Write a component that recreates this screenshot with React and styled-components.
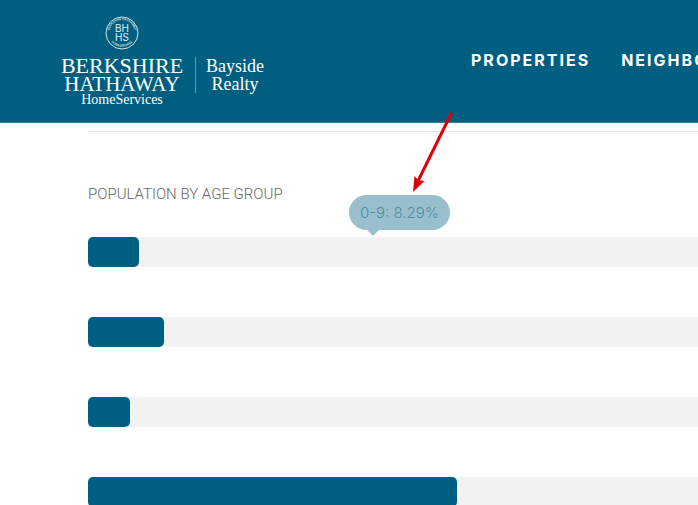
import React from "react";
import styled, { createGlobalStyle } from "styled-components";

const GlobalStyle = createGlobalStyle`
  *, *::before, *::after { box-sizing: border-box; }
  body {
    margin: 0;
    background: #fff;
    font-family: Inter, "Open Sans", sans-serif;
    overflow-x: hidden;
  }
`;

const Page = styled.div`
  position: relative;
`;

const Header = styled.header`
  display: flex;
  align-items: flex-start;
  gap: 207px;
  padding: 15px 0 16px 60px;
  background: #005e80;
  border-bottom: 1px solid #33809a;
  overflow: hidden;
`;

const Brand = styled.a`
  display: flex;
  align-items: flex-end;
  flex: none;
  color: #fff;
  text-decoration: none;
  font-family: "Liberation Serif", serif;
`;

const BrandMain = styled.span`
  display: flex;
  flex-direction: column;
  align-items: center;
  width: 124px;
  white-space: nowrap;
`;

const Seal = styled.svg`
  display: block;
  width: 36px;
  height: 36px;
  margin-bottom: 5px;
`;

const BrandName = styled.span`
  font-size: ${(p) => p.$size}px;
  line-height: ${(p) => p.$line}px;
`;

const Office = styled.span`
  display: flex;
  flex-direction: column;
  align-items: center;
  margin: 0 0 13px 11px;
  padding-left: 10px;
  border-left: 1px solid #5f9cb2;
  font-size: 18px;
  line-height: 18px;
  white-space: nowrap;
`;

const Nav = styled.nav`
  display: flex;
  gap: 31px;
  padding-top: 35px;
`;

const NavLink = styled.a`
  color: #fff;
  font-size: 16px;
  font-weight: 700;
  line-height: 20px;
  letter-spacing: 2px;
  text-decoration: none;
  white-space: nowrap;
`;

const Content = styled.main`
  padding: 8px 0 0 88px;
`;

const Divider = styled.hr`
  margin: 0;
  border: 0;
  border-top: 1px solid #e3e3e3;
`;

const Title = styled.h2`
  margin: 52px 0 33px;
  color: #666;
  font-family: Roboto, sans-serif;
  font-size: 15px;
  font-weight: 300;
  line-height: 20px;
  white-space: nowrap;
`;

const Chart = styled.div`
  display: grid;
  gap: 50px;
`;

const Track = styled.div`
  position: relative;
  height: 30px;
  background: #f2f2f2;
`;

const Fill = styled.div`
  height: 100%;
  border-radius: 5px;
  background: #005e80;
`;

const Tooltip = styled.div`
  position: absolute;
  left: 261px;
  bottom: 37px;
  height: 35px;
  padding: 0 11px;
  border-radius: 18px;
  background: #99bfcc;
  color: #4d8ea6;
  font-size: 15px;
  font-weight: 300;
  line-height: 35px;
  white-space: nowrap;

  &::after {
    content: "";
    position: absolute;
    left: 18px;
    top: 100%;
    border: 6px solid transparent;
    border-top-color: #99bfcc;
    border-bottom: 0;
  }
`;

const Arrow = styled.svg`
  position: absolute;
  left: 410px;
  top: 110px;
  width: 46px;
  height: 84px;
  pointer-events: none;
`;

const groups = [
  { share: 8.29, label: "0-9: 8.29%" },
  { share: 12.4 },
  { share: 6.85 },
  { share: 60.5 },
];

function BrandSeal() {
  return (
    <Seal viewBox="0 0 36 36" fill="none" stroke="#d5e4ea" aria-hidden="true">
      <defs>
        <path id="seal-top" d="M5.5 20 A12.7 12.7 0 1 1 30.5 20" />
        <path id="seal-bottom" d="M4.5 22 A14.2 14.2 0 0 0 31.5 22" />
      </defs>
      <circle cx="18" cy="18" r="16" strokeWidth="1" />
      <g fill="#d5e4ea" stroke="none" fontFamily="Inter, sans-serif">
        <text fontSize="3" fontWeight="600">
          <textPath href="#seal-top" startOffset="50%" textAnchor="middle">
            BERKSHIRE HATHAWAY
          </textPath>
        </text>
        <text fontSize="3" fontWeight="600">
          <textPath href="#seal-bottom" startOffset="50%" textAnchor="middle">
            HOMESERVICES
          </textPath>
        </text>
        <g fontSize="10" fill="#e6eff2" textAnchor="middle">
          <text x="18" y="17">BH</text>
          <text x="18" y="26">HS</text>
        </g>
      </g>
    </Seal>
  );
}

export default function App() {
  return (
    <Page>
      <GlobalStyle />
      <Header>
        <Brand href="#">
          <BrandMain>
            <BrandSeal />
            <BrandName $size={22} $line={19}>BERKSHIRE</BrandName>
            <BrandName $size={21} $line={18}>HATHAWAY</BrandName>
            <BrandName $size={14} $line={13}>HomeServices</BrandName>
          </BrandMain>
          <Office>
            <span>Bayside</span>
            <span>Realty</span>
          </Office>
        </Brand>
        <Nav>
          <NavLink href="#">PROPERTIES</NavLink>
          <NavLink href="#">NEIGHBORHOODS</NavLink>
        </Nav>
      </Header>
      <Content>
        <Divider />
        <Title>POPULATION BY AGE GROUP</Title>
        <Chart>
          {groups.map((g) => (
            <Track key={g.share}>
              <Fill style={{ width: `${g.share}%` }} />
              {g.label && <Tooltip role="tooltip">{g.label}</Tooltip>}
            </Track>
          ))}
        </Chart>
      </Content>
      <Arrow viewBox="0 0 46 84" aria-hidden="true">
        <path d="M41.5 3 L8 71" stroke="#dc0004" strokeWidth="3" fill="none" />
        <path d="M3 82 L4.5 66 L8 70 L14.5 71 Z" fill="#dc0004" />
      </Arrow>
    </Page>
  );
}
